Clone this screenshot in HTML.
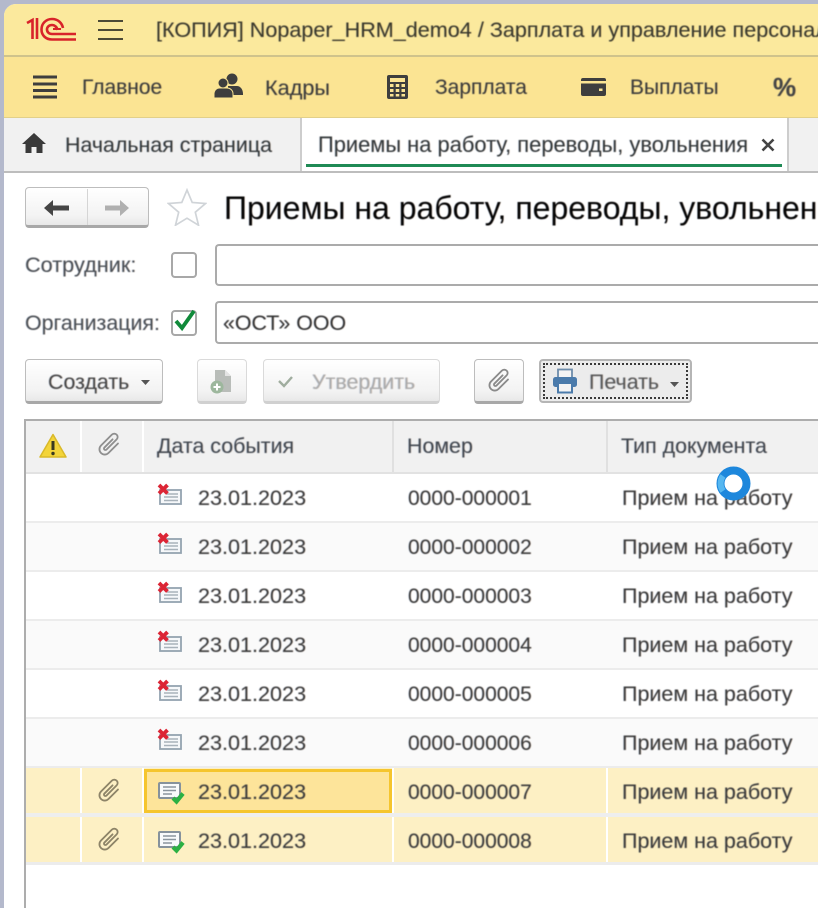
<!DOCTYPE html>
<html lang="ru"><head><meta charset="utf-8"><title>Приемы на работу</title>
<style>
html,body{margin:0;padding:0;background:#fff}
#p{position:relative;width:818px;height:908px;overflow:hidden;background:#fff;font-family:"Liberation Sans",sans-serif;font-size:21.4px;color:#3a3a3a}
#p div,#p svg{position:absolute}
.t{white-space:nowrap;line-height:26px;filter:blur(.4px);text-shadow:.5px 0 rgba(200,90,0,.18),-.5px 0 rgba(0,90,200,.18)}
.btn{box-sizing:border-box;border:1.500px solid #bdbdbd;border-bottom:3px solid #a8a8a8;border-radius:4px;background:linear-gradient(#fff,#f3f3f3 75%,#e8e8e8)}
.dis{border-color:#dadada;border-bottom-color:#d0d0d0}
.inp{box-sizing:border-box;border:2px solid #ababab;border-right:0;border-radius:4px 0 0 4px;background:#fff;left:215px;width:610px}
.cb{box-sizing:border-box;border:2px solid #a8a8a8;border-radius:4px;background:#fff;left:171px;width:26px;height:26px}
.v{width:2px;background:#fff}
.hl{left:26px;width:792px;height:2px;background:#ececec}
.date{left:198px;font-size:21.6px}.num{left:408px;font-size:21px}.typ{left:622px;font-size:21.500px}
.h{font-size:21.400px;color:#40464e}
</style></head><body><div id="p">
<svg width="0" height="0" style="left:0;top:0"><defs>
<symbol id="clip" viewBox="-1 -1 26 26"><path d="M17.500 5v14a5.500 5.500 0 0 1-11 0V3a3.500 3.500 0 0 1 7 0v15a1.500 1.500 0 0 1-3 0V6" transform="rotate(45 12 12)" fill="none" stroke="currentColor" stroke-width="1.900" stroke-linecap="round"/></symbol>
<symbol id="doc-x" viewBox="0 0 26 24"><rect x="3" y="7" width="21" height="14" fill="#f6f8fa" stroke="#94a3b0" stroke-width="1.800"/><path d="M10 11h11M7 14h14M7 17.500h14" stroke="#a8b2ba" stroke-width="1.500"/><path d="M2 2l8.500 8.500M10.500 2 2 10.500" stroke="#dc2535" stroke-width="3.800"/></symbol>
<symbol id="doc-ok" viewBox="0 0 28 24"><rect x="2" y="2" width="21" height="15" rx="1" fill="#f8fafb" stroke="#86929c" stroke-width="2"/><path d="M6 6h13M6 9.500h13M6 13h9" stroke="#8a959e" stroke-width="1.500"/><path d="M16 17l3.500 3.500 6.500-8" fill="none" stroke="#2bb043" stroke-width="4.200"/></symbol>
</defs></svg>

<!-- outer frame -->
<div style="left:0;top:0;width:818px;height:908px;background:#b4b9cc"></div>
<div style="left:4px;top:4px;width:814px;height:904px;background:#fff;border-top-left-radius:12px;overflow:hidden">
  <div style="left:0;top:0;width:814px;height:51px;background:#fbe99d"></div>
  <div style="left:0;top:51px;width:814px;height:1.500px;background:#cfc38c"></div>
  <div style="left:0;top:52.500px;width:814px;height:61px;background:#fbe493"></div>
  <div style="left:0;top:113px;width:814px;height:1px;background:#e2d08a"></div>
  <div style="left:0;top:114px;width:814px;height:53px;background:#f1f1f1"></div>
  <div style="left:0;top:167px;width:814px;height:2px;background:#bdbdbd"></div>
</div>

<!-- 1C logo -->
<svg style="left:26px;top:17px" width="50" height="25" viewBox="0 0 50 25"><g fill="none" stroke="#d8232a" stroke-width="2.600"><path d="M1 6 6.500 3v19M11 1v21"/><path d="M37 11C36 6 32 2 26 2c-6 0-10.500 4.500-10.500 10.500S20 22.500 26 22.500h24"/><path d="M31.500 13c-.5-3-3-5-5.500-5-3 0-5 2-5 4.500S23 17 26 17h24"/></g><path d="M27 11h8v2h-8z" fill="#d8232a"/></svg>
<!-- hamburger -->
<svg style="left:98px;top:19px" width="25" height="22" viewBox="0 0 25 22"><path d="M0 2h25M0 11h25M0 20h25" stroke="#4c4a36" stroke-width="2"/></svg>
<div class="t" style="left:156px;top:17px;font-size:21.600px;color:#39382c">[КОПИЯ] Nopaper_HRM_demo4 / Зарплата и управление персонал</div>

<!-- menu -->
<svg style="left:33px;top:75px" width="24" height="24" viewBox="0 0 24 24"><path d="M0 2h24M0 9h24M0 15.500h24M0 22h24" stroke="#3e3e3e" stroke-width="3"/></svg>
<div class="t" style="left:82px;top:75px;font-size:21px">Главное</div>
<svg style="left:214px;top:73px" width="29" height="26" viewBox="0 0 29 26" fill="#3e3e3e"><circle cx="18" cy="6" r="5.500"/><path d="M14 13h9c3 0 6 3 6 8v1H14z"/><circle cx="9" cy="10" r="5" stroke="#fbe493" stroke-width="1"/><path d="M0 25v-4c0-4 3-6 5-6h8c3 0 6 2 6 6v4z" stroke="#fbe493" stroke-width="1"/></svg>
<div class="t" style="left:265px;top:75px;font-size:21.700px">Кадры</div>
<svg style="left:387px;top:75px" width="21" height="24" viewBox="0 0 21 24"><rect width="21" height="24" rx="2" fill="#3e3e3e"/><rect x="3" y="3" width="15" height="4" fill="#fbe493"/><path d="M3 9h3.500v3H3zM8.750 9h3.500v3h-3.500zM14.500 9H18v3h-3.500zM3 14h3.500v3H3zM8.750 14h3.500v3h-3.500zM14.500 14H18v3h-3.500zM3 19h3.500v2.500H3zM8.750 19h3.500v2.500h-3.500zM14.500 19H18v2.500h-3.500z" fill="#fbe493"/></svg>
<div class="t" style="left:435px;top:75px;font-size:21px">Зарплата</div>
<svg style="left:581px;top:78px" width="25" height="18" viewBox="0 0 25 18"><rect width="25" height="18" rx="2" fill="#3e3e3e"/><rect y="3" width="25" height="2.500" fill="#fbe493"/><rect x="18" y="10.500" width="3.500" height="2.500" fill="#fbe493"/></svg>
<div class="t" style="left:630px;top:75px;font-size:21px">Выплаты</div>
<div class="t" style="left:773px;top:74px;font-size:26px;font-weight:bold;color:#444">%</div>

<!-- tabs -->
<svg style="left:22px;top:133px" width="24" height="20" viewBox="0 0 24 20"><path d="M12 0 0 11h3.500v9h6v-6h5v6h6v-9H24z" fill="#3a3a3a"/></svg>
<div class="t" style="left:65px;top:132px;color:#33383a">Начальная страница</div>
<div style="left:300px;top:118px;width:2px;height:54px;background:#cdcdcd"></div>
<div style="left:302px;top:118px;width:485px;height:53px;background:#fff"></div>
<div style="left:787px;top:118px;width:2px;height:54px;background:#cdcdcd"></div>
<div style="left:306px;top:164px;width:476px;height:2.500px;background:#1f8a55"></div>
<div class="t" style="left:318px;top:132px;color:#33383a;font-size:21.900px">Приемы на работу, переводы, увольнения</div>
<svg style="left:761px;top:138px" width="14" height="14" viewBox="0 0 14 14"><path d="M1.500 1.500l11 11M12.500 1.500l-11 11" stroke="#444" stroke-width="2.600"/></svg>
<div style="left:4px;top:171px;width:814px;height:2px;background:#bdbdbd"></div>

<!-- nav buttons -->
<div class="btn" style="left:25px;top:187px;width:124px;height:41px"></div>
<div style="left:87px;top:189px;width:1px;height:36px;background:#d5d5d5"></div>
<svg style="left:44px;top:200px" width="25" height="16" viewBox="0 0 25 16"><path d="M0 8 9 0v5.500h16v5H9V16z" fill="#454545"/></svg>
<svg style="left:105px;top:200px" width="24" height="16" viewBox="0 0 24 16"><path d="M24 8 15 0v5.500H0v5h15V16z" fill="#b0b0b0"/></svg>
<svg style="left:167px;top:188px" width="40" height="38" viewBox="0 0 40 38"><path d="M20 2l5.200 12.500 13.300 1-10.200 8.700 3.200 13-11.500-7-11.500 7 3.200-13L1.500 15.500l13.300-1z" fill="#fff" stroke="#d0d4d8" stroke-width="1.700"/></svg>
<div class="t" style="left:224px;top:190px;font-size:32px;line-height:36px;color:#050505">Приемы на работу, переводы, увольнен</div>

<!-- filters -->
<div class="t" style="left:25px;top:252px;font-size:21.700px;color:#4a4f55">Сотрудник:</div>
<div class="cb" style="top:252px"></div>
<div class="inp" style="top:244px;height:42px"></div>
<div class="t" style="left:25px;top:310px;color:#4a4f55">Организация:</div>
<div class="cb" style="top:310px"></div>
<svg style="left:172px;top:306px" width="27" height="28" viewBox="0 0 27 28"><path d="M4 15l6 7L22 5" fill="none" stroke="#108a3a" stroke-width="3.800"/></svg>
<div class="inp" style="top:301px;height:43px"></div>
<div class="t" style="left:223px;top:310px;color:#333">«ОСТ» ООО</div>

<!-- toolbar -->
<div class="btn" style="left:25px;top:359px;width:138px;height:45px"></div>
<div class="t" style="left:48px;top:369px;color:#444">Создать</div>
<svg style="left:141px;top:380px" width="9" height="5" viewBox="0 0 9 5"><path d="M0 0h9L4.500 5z" fill="#555"/></svg>
<div class="btn dis" style="left:197px;top:359px;width:50px;height:45px"></div>
<svg style="left:209px;top:369px" width="25" height="26" viewBox="0 0 25 26"><path d="M6 1h10l6 6v16H6z" fill="#b9bdb9"/><path d="M16 1v6h6" fill="#e4e4e4"/><circle cx="8" cy="18" r="6.500" fill="#9db79d"/><path d="M4.500 18h7M8 14.500v7" stroke="#fff" stroke-width="2"/></svg>
<div class="btn dis" style="left:263px;top:359px;width:177px;height:45px"></div>
<svg style="left:277px;top:375px" width="17" height="13" viewBox="0 0 17 13"><path d="M2 6l5 5 8-9" fill="none" stroke="#a0ad9f" stroke-width="2.400"/></svg>
<div class="t" style="left:312px;top:369px;color:#aaa">Утвердить</div>
<div class="btn" style="left:474px;top:359px;width:50px;height:45px"></div>
<svg style="left:487px;top:368px;color:#8a8a8a" width="25" height="25"><use href="#clip"/></svg>
<div class="btn" style="left:539px;top:359px;width:153px;height:44px;border:2px solid #b5b5b5;background:#ececec"></div>
<div style="box-sizing:border-box;left:543px;top:363px;width:145px;height:36px;border:2px dotted #3a3a3a"></div>
<svg style="left:552px;top:368px" width="26" height="26" viewBox="0 0 26 26"><rect x="6" y="1.500" width="14" height="9" fill="#f4f4f4" stroke="#6d8cab" stroke-width="1.800"/><rect x="1" y="9" width="24" height="10" rx="2.500" fill="#4b7bab"/><rect x="6" y="15" width="14" height="9.500" fill="#f4f4f4" stroke="#4b7bab" stroke-width="2"/></svg>
<div class="t" style="left:589px;top:369px;color:#555">Печать</div>
<svg style="left:670px;top:382px" width="9" height="5" viewBox="0 0 9 5"><path d="M0 0h9L4.500 5z" fill="#555"/></svg>

<!-- table frame -->
<div style="left:24px;top:419px;width:794px;height:2px;background:#adadad"></div>
<div style="left:24px;top:419px;width:2px;height:489px;background:#adadad"></div>
<!-- header -->
<div style="left:26px;top:421px;width:792px;height:51px;background:#f1f1f1"></div>
<div style="left:26px;top:472px;width:792px;height:2px;background:#e2e2e2"></div>
<div class="v" style="left:80px;top:421px;height:51px"></div>
<div class="v" style="left:142px;top:421px;height:51px"></div>
<div style="left:392px;top:421px;width:2px;height:51px;background:#e0e0e0"></div>
<div style="left:606px;top:421px;width:2px;height:51px;background:#e0e0e0"></div>
<svg style="left:39px;top:433px" width="28" height="25" viewBox="0 0 28 25"><path d="M14 1.500 1 24h26z" fill="#f3d43a" stroke="#d9b92a" stroke-width="1.500" stroke-linejoin="round"/><path d="M14 8v9" stroke="#3a3a20" stroke-width="3"/><circle cx="14" cy="20.500" r="1.700" fill="#3a3a20"/></svg>
<svg style="left:97px;top:432px;color:#8f8f8f" width="25" height="25"><use href="#clip"/></svg>
<div class="t h" style="left:157px;top:433px">Дата события</div>
<div class="t h" style="left:407px;top:433px">Номер</div>
<div class="t h" style="left:621px;top:433px">Тип документа</div>

<!-- row backgrounds -->
<div style="left:26px;top:523px;width:792px;height:47px;background:#fafafa"></div>
<div style="left:26px;top:621px;width:792px;height:47px;background:#fafafa"></div>
<div style="left:26px;top:719px;width:792px;height:47px;background:#fafafa"></div>
<div class="hl" style="top:521px"></div><div class="hl" style="top:570px"></div><div class="hl" style="top:619px"></div><div class="hl" style="top:668px"></div><div class="hl" style="top:717px"></div><div class="hl" style="top:766px"></div><div class="hl" style="top:813px;height:4px;background:#eee"></div><div class="hl" style="top:862px;height:3px"></div>
<div style="left:26px;top:768px;width:792px;height:45px;background:#fdf0c4"></div>
<div style="left:26px;top:817px;width:792px;height:45px;background:#fdf0c4"></div>
<div class="v" style="left:80px;top:768px;height:45px"></div><div class="v" style="left:142px;top:768px;height:45px"></div><div class="v" style="left:392px;top:768px;height:45px"></div><div class="v" style="left:606px;top:768px;height:45px"></div>
<div class="v" style="left:80px;top:817px;height:45px"></div><div class="v" style="left:142px;top:817px;height:45px"></div><div class="v" style="left:392px;top:817px;height:45px"></div><div class="v" style="left:606px;top:817px;height:45px"></div>
<div style="box-sizing:border-box;left:144px;top:769px;width:248px;height:44px;background:#fde49a;border:3px solid #f5c52e"></div>

<!-- rows -->
<svg style="left:157px;top:483px" width="26" height="24"><use href="#doc-x"/></svg><div class="t date" style="top:485px">23.01.2023</div><div class="t num" style="top:486px">0000-000001</div><div class="t typ" style="top:485px">Прием на работу</div>
<svg style="left:157px;top:532px" width="26" height="24"><use href="#doc-x"/></svg><div class="t date" style="top:534px">23.01.2023</div><div class="t num" style="top:535px">0000-000002</div><div class="t typ" style="top:534px">Прием на работу</div>
<svg style="left:157px;top:581px" width="26" height="24"><use href="#doc-x"/></svg><div class="t date" style="top:583px">23.01.2023</div><div class="t num" style="top:584px">0000-000003</div><div class="t typ" style="top:583px">Прием на работу</div>
<svg style="left:157px;top:630px" width="26" height="24"><use href="#doc-x"/></svg><div class="t date" style="top:632px">23.01.2023</div><div class="t num" style="top:633px">0000-000004</div><div class="t typ" style="top:632px">Прием на работу</div>
<svg style="left:157px;top:679px" width="26" height="24"><use href="#doc-x"/></svg><div class="t date" style="top:681px">23.01.2023</div><div class="t num" style="top:682px">0000-000005</div><div class="t typ" style="top:681px">Прием на работу</div>
<svg style="left:157px;top:728px" width="26" height="24"><use href="#doc-x"/></svg><div class="t date" style="top:730px">23.01.2023</div><div class="t num" style="top:731px">0000-000006</div><div class="t typ" style="top:730px">Прием на работу</div>
<svg style="left:97px;top:778px;color:#8d8468" width="25" height="25"><use href="#clip"/></svg><svg style="left:157px;top:781px" width="28" height="24"><use href="#doc-ok"/></svg><div class="t date" style="top:779px">23.01.2023</div><div class="t num" style="top:780px">0000-000007</div><div class="t typ" style="top:779px">Прием на работу</div>
<svg style="left:97px;top:827px;color:#8d8468" width="25" height="25"><use href="#clip"/></svg><svg style="left:157px;top:830px" width="28" height="24"><use href="#doc-ok"/></svg><div class="t date" style="top:828px">23.01.2023</div><div class="t num" style="top:829px">0000-000008</div><div class="t typ" style="top:828px">Прием на работу</div>

<!-- cursor ring -->
<svg style="left:715px;top:465px" width="37" height="37" viewBox="0 0 37 37"><circle cx="18.500" cy="18.500" r="13" fill="#fff" fill-opacity=".85" stroke="#1d87dc" stroke-width="8"/><path d="M8 11a13 13 0 0 0 0 15" fill="none" stroke="#56b7f0" stroke-width="6"/></svg>
</div></body></html>
